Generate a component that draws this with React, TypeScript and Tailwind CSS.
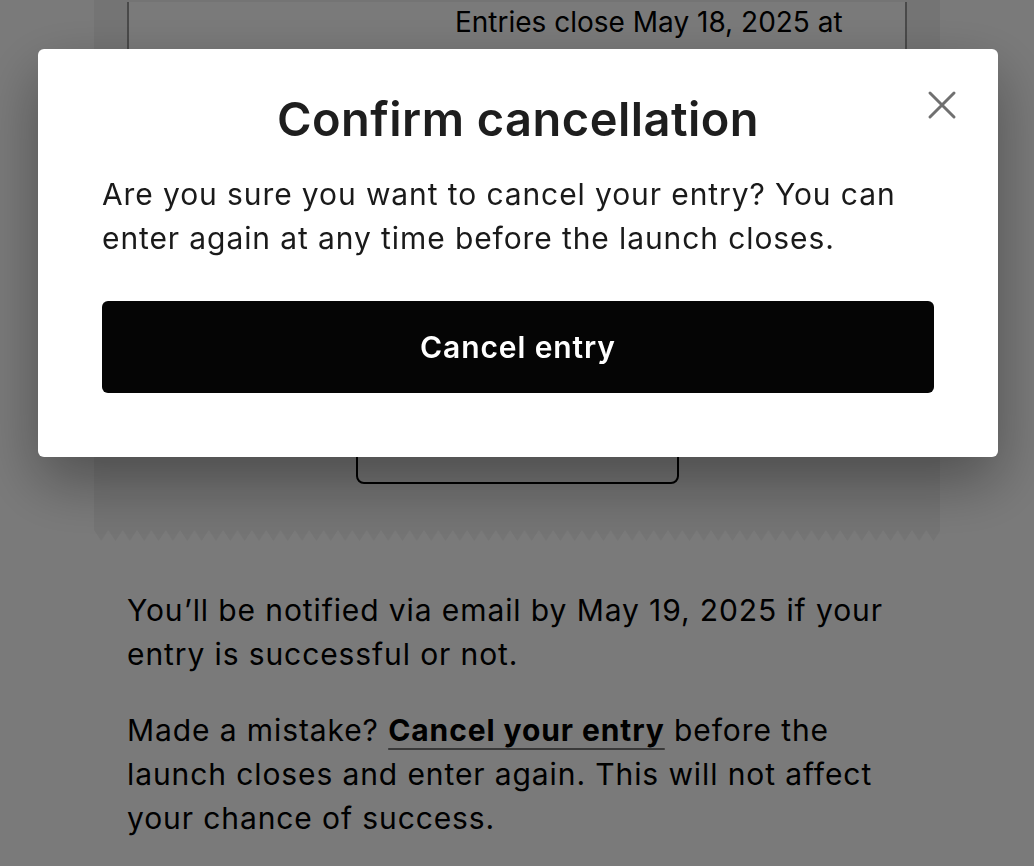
import { useState } from "react";

function Zigzag() {
	return (
		<svg className="block w-full h-[11px]" preserveAspectRatio="none">
			<defs>
				<pattern id="zig" width="14.35" height="11" patternUnits="userSpaceOnUse">
					<path d="M0 0 L14.35 0 L7.17 11 Z" fill="#f2f2f2" />
				</pattern>
			</defs>
			<rect width="100%" height="11" fill="url(#zig)" />
		</svg>
	);
}

export default function App() {
	const [open, setOpen] = useState(true);

	return (
		<div
			className="relative min-h-[866px] bg-white overflow-hidden text-black"
			style={{ fontFamily: "Inter, 'Noto Sans', sans-serif" }}
		>
			{/* page behind the dialog */}
			<div className="mx-[94px] -mt-[40px]">
				<div className="bg-[#f2f2f2] px-[33px] pt-[42px] pb-[46px]">
					<div className="bg-white border-x-2 border-[#9a9a9a] h-[430px] pl-[326px]">
						<p className="text-[28px] leading-[40px]">Entries close May 18, 2025 at</p>
					</div>
					<div className="flex justify-center -mt-[28px]">
						<div className="w-[323px] h-[80px] border-2 border-black rounded-[8px]" />
					</div>
				</div>
				<Zigzag />
			</div>

			<div className="mx-[127px] mt-[47px] text-[30px] leading-[44px] tracking-[0.03em] max-w-[781px]">
				<p>You’ll be notified via email by May 19, 2025 if your entry is successful or not.</p>
				<p className="mt-[32px]">
					Made a mistake?{" "}
					<a href="#" className="font-bold underline decoration-[#777] decoration-2 underline-offset-[7px]">
						Cancel your entry
					</a>{" "}
					before the launch closes and enter again. This will not affect your chance of success.
				</p>
			</div>

			{open && (
				<div className="fixed inset-0 bg-black/[0.52]">
					<div className="absolute left-[38px] top-[49px] w-[960px] bg-white rounded-[6px] px-[64px] pt-[42px] pb-[64px] shadow-[0_24px_60px_rgba(0,0,0,0.35)]">
						<button
							onClick={() => setOpen(false)}
							className="absolute top-[40px] right-[40px] w-[32px] h-[32px] flex items-center justify-center"
							aria-label="Close"
						>
							<svg width="30" height="30" viewBox="0 0 30 30" fill="none" stroke="#707070" strokeWidth="3" strokeLinecap="round">
								<path d="M3 3 L27 27 M27 3 L3 27" />
							</svg>
						</button>
						<h2 className="text-center text-[47px] leading-[55px] tracking-[0.01em] font-semibold text-[#1e1e1e]">
							Confirm cancellation
						</h2>
						<p className="mt-[26px] text-[30px] leading-[44px] tracking-[0.03em] text-[#1a1a1a]">
							Are you sure you want to cancel your entry? You can enter again at any time before the launch closes.
						</p>
						<button className="mt-[41px] w-full h-[92px] bg-[#050505] rounded-[6px] text-white text-[30px] tracking-[0.03em] font-semibold">
							Cancel entry
						</button>
					</div>
				</div>
			)}
		</div>
	);
}
